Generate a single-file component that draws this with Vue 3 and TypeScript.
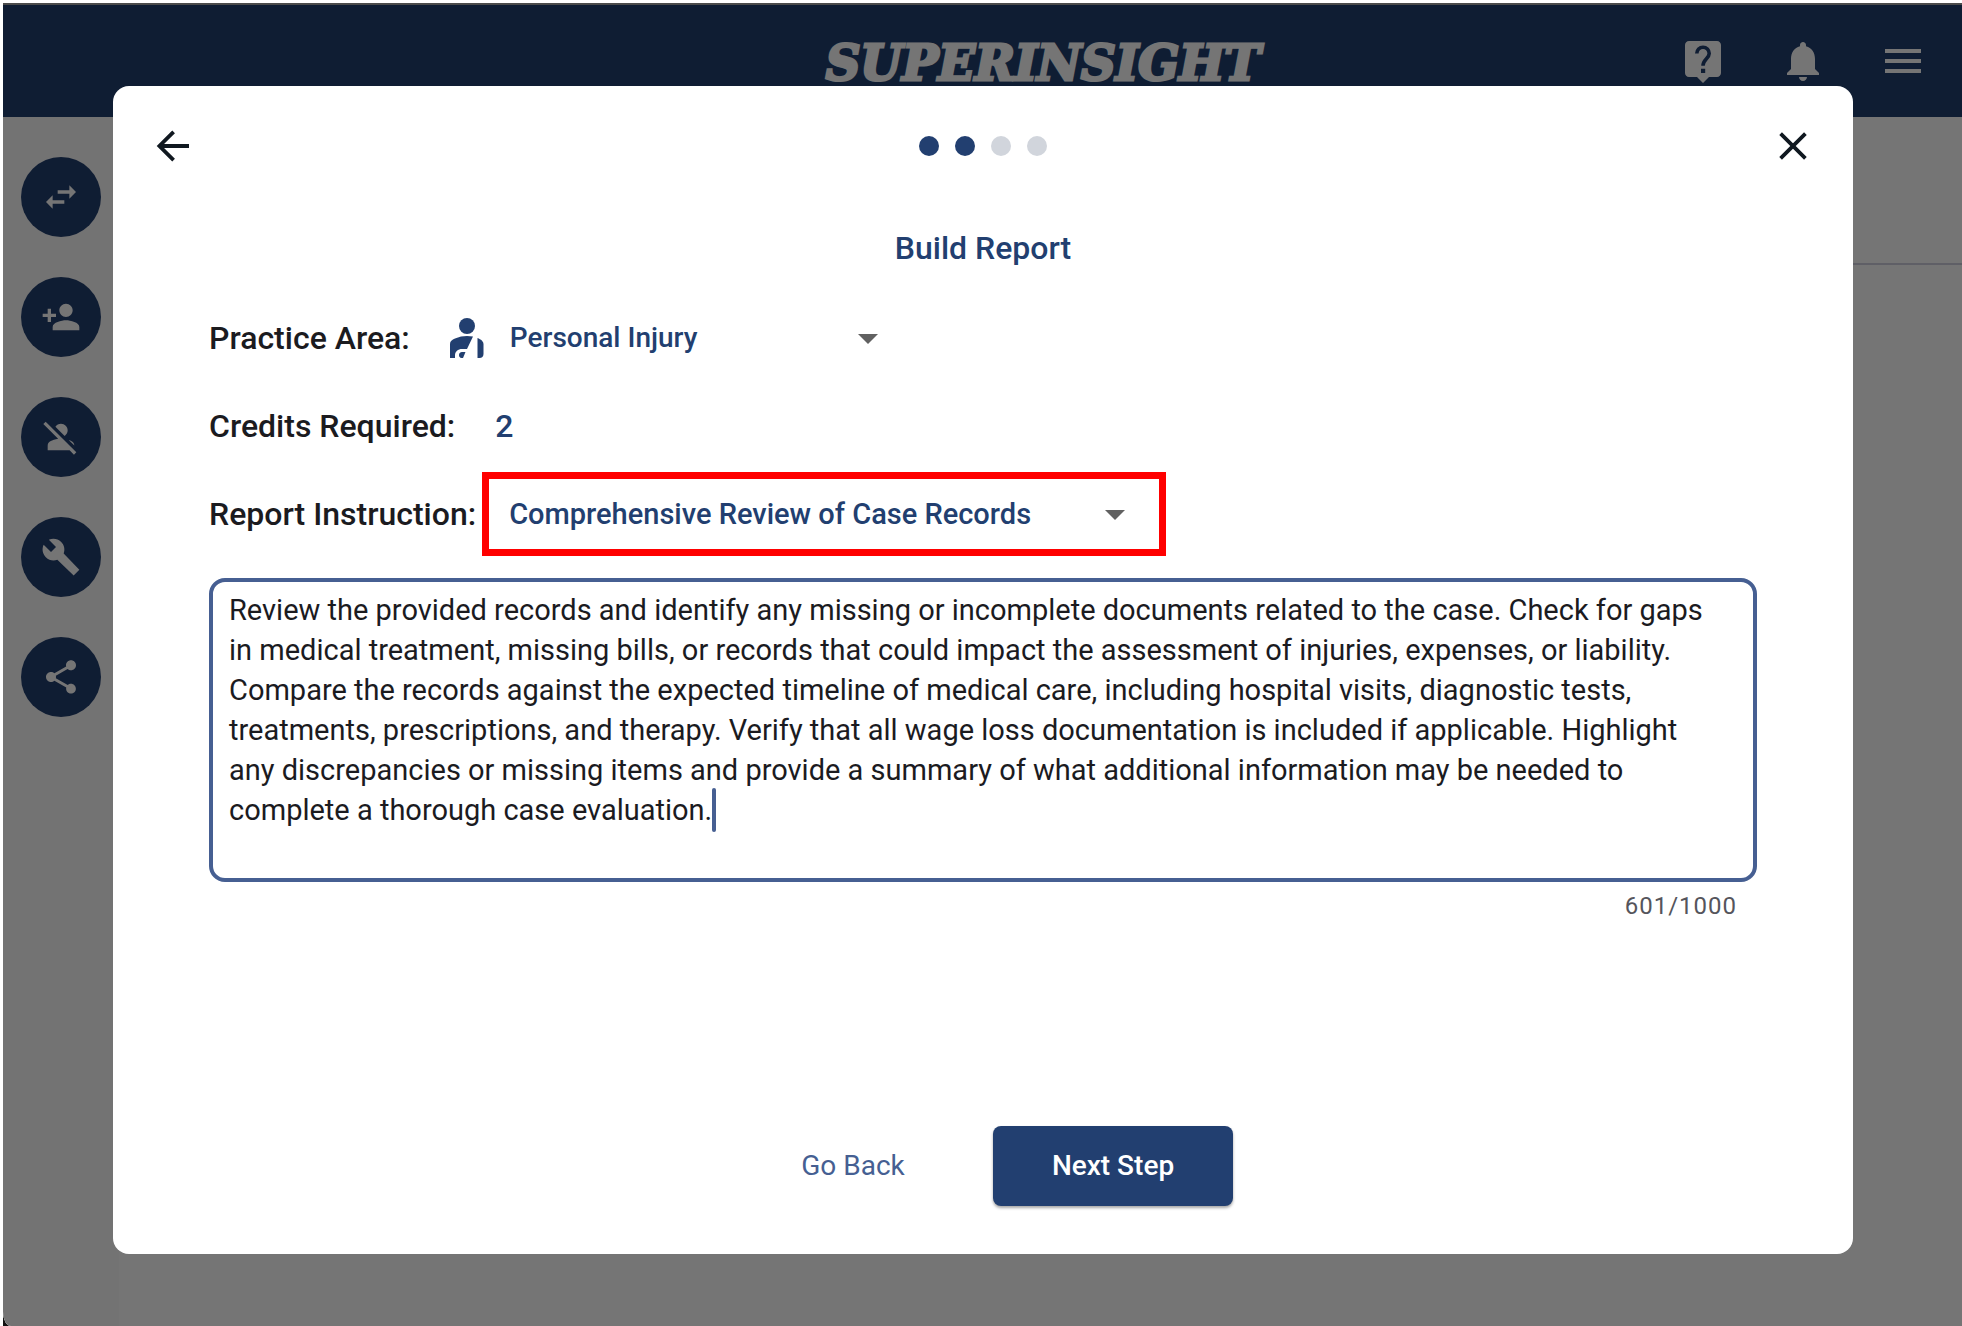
<script setup lang="ts">
import { computed, ref } from 'vue'

interface SideAction {
  label: string
  path: string
}

const sideActions: SideAction[] = [
  {
    label: 'Switch case',
    path: 'M6.99 11L3 15l3.99 4v-3H14v-2H6.99v-3zM21 9l-3.99-4v3H10v2h7.01v3L21 9z',
  },
  {
    label: 'Add client',
    path: 'M15 12c2.21 0 4-1.79 4-4s-1.79-4-4-4-4 1.79-4 4 1.79 4 4 4zm-9-2V7H4v3H1v2h3v3h2v-3h3v-2H6zm9 4c-2.67 0-8 1.34-8 4v2h16v-2c0-2.66-5.33-4-8-4z',
  },
  {
    label: 'Remove client',
    path: 'M8.65 5.82C9.36 4.72 10.6 4 12 4c2.21 0 4 1.79 4 4 0 1.4-.72 2.64-1.82 3.35L8.65 5.82zM20 17.17c-.02-1.1-.63-2.11-1.61-2.62-.54-.28-1.13-.54-1.77-.76L20 17.17zM21.19 21.19L2.81 2.81 1.39 4.22l8.89 8.89c-1.81.23-3.39.79-4.67 1.45C4.61 15.07 4 16.1 4 17.22V20h13.17l2.61 2.61 1.41-1.42z',
  },
  {
    label: 'Tools',
    path: 'M23 19.7l-9.4-9.8c.9-2.3.4-5-1.5-6.9-2-2-5-2.4-7.4-1.3L9 6 6 9 1.6 4.7C.4 7.1.9 10.1 2.9 12.1c1.9 1.9 4.6 2.4 6.9 1.5l9.8 9.5z',
  },
  {
    label: 'Share',
    path: 'M18 16.08c-.76 0-1.44.3-1.96.77L8.91 12.7c.05-.23.09-.46.09-.7s-.04-.47-.09-.7l7.05-4.11c.54.5 1.25.81 2.04.81 1.66 0 3-1.34 3-3s-1.34-3-3-3-3 1.34-3 3c0 .24.04.47.09.7L8.04 9.81C7.5 9.31 6.79 9 6 9c-1.66 0-3 1.34-3 3s1.34 3 3 3c.79 0 1.5-.31 2.04-.81l7.12 4.16c-.05.21-.08.43-.08.65 0 1.61 1.31 2.92 2.92 2.92s2.92-1.31 2.92-2.92-1.31-2.92-2.92-2.92z',
  },
]

const totalSteps = 4
const currentStep = ref(2)
const credits = ref(2)
const practiceArea = ref('Personal Injury')
const reportType = ref('Comprehensive Review of Case Records')
const maxLength = 1000
const instruction = ref(
  'Review the provided records and identify any missing or incomplete documents related to the case. Check for gaps in medical treatment, missing bills, or records that could impact the assessment of injuries, expenses, or liability. Compare the records against the expected timeline of medical care, including hospital visits, diagnostic tests, treatments, prescriptions, and therapy. Verify that all wage loss documentation is included if applicable. Highlight any discrepancies or missing items and provide a summary of what additional information may be needed to complete a thorough case evaluation.',
)
const counter = computed(() => `${instruction.value.length}/${maxLength}`)
</script>

<template>
  <div class="frame">
    <div class="page">
      <header class="topbar">
        <div class="logo">SUPERINSIGHT</div>
        <nav class="topbar-actions">
          <button type="button" class="icon-button" aria-label="Help">
            <svg viewBox="0 0 24 24" class="icon-48">
              <path fill="currentColor" d="M19 2H5c-1.11 0-2 .9-2 2v14c0 1.1.89 2 2 2h4l3 3 3-3h4c1.1 0 2-.9 2-2V4c0-1.1-.9-2-2-2z" />
              <path class="question" d="M8.9 8.2a3.1 3.1 0 1 1 6.2 0c0 2.5-3.1 2.9-3.1 6.2" />
              <path class="question-dot" d="M11 15.9h2.1V18H11z" />
            </svg>
          </button>
          <button type="button" class="icon-button" aria-label="Notifications">
            <svg viewBox="0 0 24 24" class="icon-48">
              <path fill="currentColor" d="M12 22c1.1 0 2-.9 2-2h-4c0 1.1.89 2 2 2zm6-6v-5c0-3.07-1.64-5.64-4.5-6.32V4c0-.83-.67-1.5-1.5-1.5s-1.5.67-1.5 1.5v.68C7.63 5.36 6 7.92 6 11v5l-2 2v1h16v-1l-2-2z" />
            </svg>
          </button>
          <button type="button" class="icon-button" aria-label="Menu">
            <svg viewBox="0 0 24 24" class="icon-48">
              <path fill="currentColor" d="M3 18h18v-2H3v2zm0-5h18v-2H3v2zm0-7v2h18V6H3z" />
            </svg>
          </button>
        </nav>
      </header>
      <div class="body">
        <aside class="sidebar">
          <button v-for="action in sideActions" :key="action.label" type="button" class="side-button" :aria-label="action.label">
            <svg viewBox="0 0 24 24" class="icon-40"><path fill="currentColor" :d="action.path" /></svg>
          </button>
        </aside>
        <main class="content">
          <div class="content-head"></div>
        </main>
      </div>
    </div>

    <div class="backdrop">
      <section class="dialog" role="dialog" aria-modal="true" aria-labelledby="dialog-title">
        <div class="dialog-nav">
          <button type="button" class="icon-button" aria-label="Back">
            <svg viewBox="0 0 24 24" class="icon-48 line-icon">
              <path d="M20 12H5.300M12.300 4.900L5.200 12l7.100 7.100" />
            </svg>
          </button>
          <div class="steps">
            <span v-for="step in totalSteps" :key="step" class="dot" :class="{ done: step <= currentStep }"></span>
          </div>
          <button type="button" class="icon-button" aria-label="Close">
            <svg viewBox="0 0 24 24" class="icon-48 line-icon">
              <path d="M5.8 5.8l12.4 12.4M18.2 5.8L5.8 18.2" />
            </svg>
          </button>
        </div>

        <form class="form" @submit.prevent>
          <h1 id="dialog-title" class="title">Build Report</h1>

          <div class="row">
            <label class="label" for="practice">Practice Area:</label>
            <div class="practice">
              <svg viewBox="0 0 34 40" class="injury-icon">
                <circle cx="17" cy="8" r="8" />
                <path d="M0 40V26c0-3 2-4 5-5.500C9 18.800 13 18 17 18c2 0 4 .2 6 .6L17 31h-5c-4 0-7 2.500-7 6.500V40z" />
                <path d="M15.500 34L13 40h-1.500c-1.700 0-2.500-1.400-2.500-3s1.200-3 3-3z" />
                <path d="M27.500 20c3.500 1.400 6 3.300 6 6.500V36c0 2.500-1.600 4-4 4h-2z" />
              </svg>
              <div class="select-box practice-select">
                <select id="practice" v-model="practiceArea" class="select">
                  <option>Personal Injury</option>
                </select>
                <svg viewBox="0 0 24 24" class="caret-icon"><path d="M7 10l5 5 5-5z" /></svg>
              </div>
            </div>
          </div>

          <div class="row">
            <span class="label">Credits Required:</span>
            <output class="credits">{{ credits }}</output>
          </div>

          <div class="row">
            <label class="label" for="report">Report Instruction:</label>
            <div class="highlight">
              <div class="select-box report-select">
                <select id="report" v-model="reportType" class="select">
                  <option>Comprehensive Review of Case Records</option>
                </select>
                <svg viewBox="0 0 24 24" class="caret-icon"><path d="M7 10l5 5 5-5z" /></svg>
              </div>
            </div>
          </div>

          <div class="field">
            <textarea v-model="instruction" class="textarea" rows="7" :maxlength="maxLength" aria-label="Report instruction text"></textarea>
            <span class="text-caret"></span>
          </div>
          <div class="counter">{{ counter }}</div>

          <div class="actions">
            <button type="button" class="button text-button">Go Back</button>
            <button type="submit" class="button primary-button">Next Step</button>
          </div>
        </form>
      </section>
    </div>
  </div>
</template>

<style>
body {
  margin: 0;
  background: #fff;
}
</style>

<style scoped>
.frame,
.frame * {
  box-sizing: border-box;
}

.frame {
  display: grid;
  min-height: calc(100vh - 3px);
  margin: 3px 0 0 3px;
  border-top: 2px solid #4b4b4b;
  background: #111;
  font-family: Roboto, "Liberation Sans", sans-serif;
  color: #1b1b1f;
}

.page,
.backdrop {
  grid-area: 1 / 1;
  min-width: 0;
  border-bottom-left-radius: 8px 14px;
}

.page {
  display: flex;
  flex-direction: column;
  overflow: hidden;
  background: #fff;
}

.topbar {
  display: flex;
  align-items: center;
  height: 112px;
  padding: 0 35px 0 456px;
  background: #223f70;
  color: #fff;
}

.logo {
  flex: 1;
  padding-top: 4px;
  text-align: center;
  white-space: nowrap;
  font: italic bold 48px / 56px "DejaVu Serif", serif;
  -webkit-text-stroke: 3px #fff;
}

.topbar-actions {
  display: flex;
  gap: 52px;
  padding-left: 52px;
}

.icon-button {
  display: block;
  padding: 0;
  border: 0;
  background: none;
  color: inherit;
}

.icon-48 {
  display: block;
  width: 48px;
  height: 48px;
}

.icon-40 {
  display: block;
  width: 40px;
  height: 40px;
}

.question {
  fill: none;
  stroke: #223f70;
  stroke-width: 1.8;
}

.question-dot {
  fill: #223f70;
}

.body {
  display: flex;
  flex: 1;
}

.sidebar {
  display: flex;
  flex-direction: column;
  align-items: center;
  gap: 40px;
  width: 116px;
  padding: 40px 0;
  background: #fafafa;
}

.side-button {
  display: flex;
  align-items: center;
  justify-content: center;
  width: 80px;
  height: 80px;
  padding: 0;
  border: 0;
  border-radius: 50%;
  background: #223f70;
  color: #fff;
}

.content {
  flex: 1;
}

.content-head {
  height: 148px;
  border-bottom: 2px solid #cfd0de;
}

.backdrop {
  z-index: 1;
  display: flex;
  padding: 81px 109px 72px 110px;
  background: rgba(0, 0, 0, 0.54);
}

.dialog {
  display: flex;
  flex: 1;
  flex-direction: column;
  min-width: 0;
  border-radius: 16px;
  background: #fff;
}

.dialog-nav {
  display: flex;
  align-items: center;
  justify-content: space-between;
  padding: 36px 36px 0;
  color: #101820;
}

.line-icon {
  fill: none;
  stroke: currentColor;
  stroke-width: 1.9;
}

.steps {
  display: flex;
  gap: 16px;
}

.dot {
  width: 20px;
  height: 20px;
  border-radius: 50%;
  background: #d1d5dc;
}

.dot.done {
  background: #223f70;
}

.form {
  display: flex;
  flex: 1;
  flex-direction: column;
  padding: 58px 96px 48px;
}

.title {
  margin: 0 0 26px;
  text-align: center;
  font-size: 32px;
  font-weight: 500;
  line-height: 40px;
  color: #223f70;
}

.row {
  display: flex;
  align-items: center;
  height: 88px;
}

.label {
  font-size: 32px;
  font-weight: 500;
  line-height: 40px;
  white-space: nowrap;
}

.practice {
  display: flex;
  align-items: center;
  gap: 26px;
  margin-left: 40px;
}

.injury-icon {
  width: 34px;
  height: 40px;
  fill: #223f70;
}

.credits {
  margin-left: 40px;
  font-size: 32px;
  font-weight: 500;
  line-height: 40px;
  color: #223f70;
}

.select-box {
  position: relative;
  display: flex;
  align-items: center;
}

.practice-select {
  width: 382px;
}

.report-select {
  width: 630px;
}

.select {
  width: 100%;
  height: 48px;
  padding: 0;
  border: 0;
  appearance: none;
  background: none;
  font: 500 28px / 40px Roboto, "Liberation Sans", sans-serif;
  color: #223f70;
}

.report-select .select {
  font-size: 29px;
}

.caret-icon {
  position: absolute;
  right: 0;
  width: 48px;
  height: 48px;
  fill: #616161;
  pointer-events: none;
}

.highlight {
  display: flex;
  align-items: center;
  height: 84px;
  margin-left: 6px;
  padding: 0 20px;
  border: 7px solid #f00;
}

.field {
  position: relative;
  margin-top: 20px;
}

.textarea {
  display: block;
  width: 100%;
  padding: 8px 24px 8px 16px;
  border: 4px solid #465f92;
  border-radius: 16px;
  outline: 0;
  resize: none;
  overflow: hidden;
  background: none;
  font: 400 29px / 40px Roboto, "Liberation Sans", sans-serif;
  color: #1b1b1f;
  caret-color: #465f92;
}

.text-caret {
  position: absolute;
  left: 503px;
  top: 210px;
  width: 4px;
  height: 44px;
  border-radius: 2px;
  background: #465f92;
}

.counter {
  margin-top: 8px;
  padding-right: 20px;
  text-align: right;
  font-size: 24px;
  line-height: 32px;
  letter-spacing: 1px;
  color: #55555c;
}

.actions {
  display: flex;
  justify-content: center;
  gap: 20px;
  margin-top: auto;
}

.button {
  width: 240px;
  height: 80px;
  padding: 0;
  border: 0;
  border-radius: 8px;
  font: 400 28px / 40px Roboto, "Liberation Sans", sans-serif;
}

.text-button {
  background: none;
  color: #465f92;
}

.primary-button {
  background: #223f70;
  box-shadow: 0 2px 3px rgba(0, 0, 0, 0.35);
  font-weight: 500;
  color: #fff;
}
</style>
